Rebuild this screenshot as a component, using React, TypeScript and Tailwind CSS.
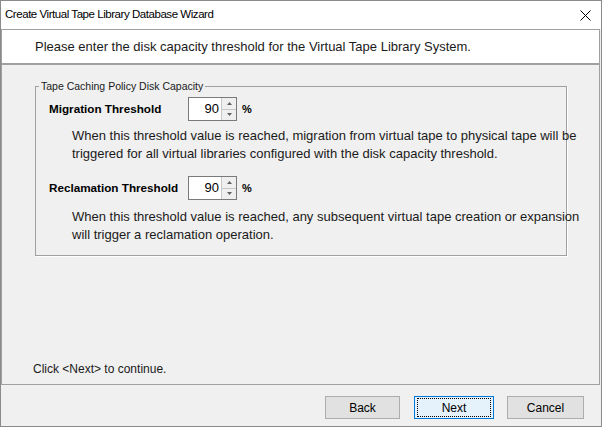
import React from "react";

const F = { fontFamily: '"Liberation Sans", Arial, sans-serif' };

function Spinner({ value }: { value: string }) {
  return (
    <div className="flex h-[24px] w-[49px] border border-[#7a7a7a] bg-white">
      <div className="flex flex-1 items-center justify-end pr-[2px] text-[13px] text-black">{value}</div>
      <div className="flex w-[15px] flex-col border-l border-[#c8c8c8]">
        <div className="flex flex-1 items-center justify-center bg-[#efefef] border-b border-[#c8c8c8]">
          <svg width="5" height="3" viewBox="0 0 5 3"><path d="M2.5 0L5 3H0z" fill="#606060" /></svg>
        </div>
        <div className="flex flex-1 items-center justify-center bg-[#efefef]">
          <svg width="5" height="3" viewBox="0 0 5 3"><path d="M0 0h5L2.5 3z" fill="#606060" /></svg>
        </div>
      </div>
    </div>
  );
}

function Btn({ label, focused, w }: { label: string; focused?: boolean; w: string }) {
  return (
    <div
      className={
        "flex h-[23px] items-center justify-center text-[12px] text-black " +
        w +
        (focused ? " border border-[#0078d7] bg-[#e5f1fb]" : " border border-[#adadad] bg-[#e1e1e1]")
      }
    >
      {focused ? (
        <div className="flex h-[19px] w-[calc(100%-4px)] items-center justify-center border border-dotted border-black">
          {label}
        </div>
      ) : (
        label
      )}
    </div>
  );
}

export default function App() {
  return (
    <div
      style={F}
      className="flex h-[427px] w-[602px] flex-col border border-[#8a8a8a] bg-[#f0f0f0] text-[#1a1a1a]"
    >
      <div className="flex h-[28px] shrink-0 items-center justify-between bg-white pl-[4px] pr-[10px]">
        <span className="text-[11.5px] text-black" style={{ letterSpacing: "-0.45px" }}>
          Create Virtual Tape Library Database Wizard
        </span>
        <svg width="11" height="11" viewBox="0 0 11 11">
          <path d="M0.5 0.5L10.5 10.5M10.5 0.5L0.5 10.5" stroke="#000" strokeWidth="1" />
        </svg>
      </div>
      <div className="mr-[1px] flex flex-1 flex-col border border-[#a0a0a0]">
        <div className="flex h-[35px] shrink-0 items-center border-b-2 border-[#a0a0a0] bg-white pl-[33px] text-[13px] text-[#1a1a1a]">
          Please enter the disk capacity threshold for the Virtual Tape Library System.
        </div>
        <div className="flex flex-1 flex-col pl-[33px] pt-[21px]">
          <div className="relative w-[532px] border border-[#a0a0a0] pb-[11px] shadow-[1px_1px_0_#ffffff]">
            <span className="absolute left-[3px] top-[-8px] bg-[#f0f0f0] px-[2px] text-[10.5px] leading-[14px] text-[#1a1a1a]">
              Tape Caching Policy Disk Capacity
            </span>
            <div className="flex flex-col pl-[13px] pt-[10px]">
              <div className="flex h-[24px] items-center">
                <span className="w-[139px] text-[11.7px] font-bold text-black">Migration Threshold</span>
                <Spinner value="90" />
                <span className="ml-[5px] text-[11px] font-bold text-black">%</span>
              </div>
              <div className="mt-[6px] whitespace-nowrap pl-[23px] text-[13px] leading-[18px] text-[#1a1a1a]">
                When this threshold value is reached, migration from virtual tape to physical tape will be
                <br />
                triggered for all virtual libraries configured with the disk capacity threshold.
              </div>
              <div className="mt-[13px] flex h-[24px] items-center">
                <span className="w-[139px] text-[11.7px] font-bold text-black">Reclamation Threshold</span>
                <Spinner value="90" />
                <span className="ml-[5px] text-[11px] font-bold text-black">%</span>
              </div>
              <div className="mt-[8px] whitespace-nowrap pl-[23px] text-[13px] leading-[18px] text-[#1a1a1a]">
                When this threshold value is reached, any subsequent virtual tape creation or expansion
                <br />
                will trigger a reclamation operation.
              </div>
            </div>
          </div>
          <div className="flex-1" />
          <div className="-ml-[2px] mb-[6px] text-[12px] text-[#1a1a1a]">Click &lt;Next&gt; to continue.</div>
        </div>
      </div>
      <div className="flex h-[41px] shrink-0 items-start justify-end pt-[11px] pr-[17px]">
        <Btn label="Back" w="w-[75px]" />
        <div className="w-[14px]" />
        <Btn label="Next" focused w="w-[80px]" />
        <div className="w-[13px]" />
        <Btn label="Cancel" w="w-[77px]" />
      </div>
    </div>
  );
}
